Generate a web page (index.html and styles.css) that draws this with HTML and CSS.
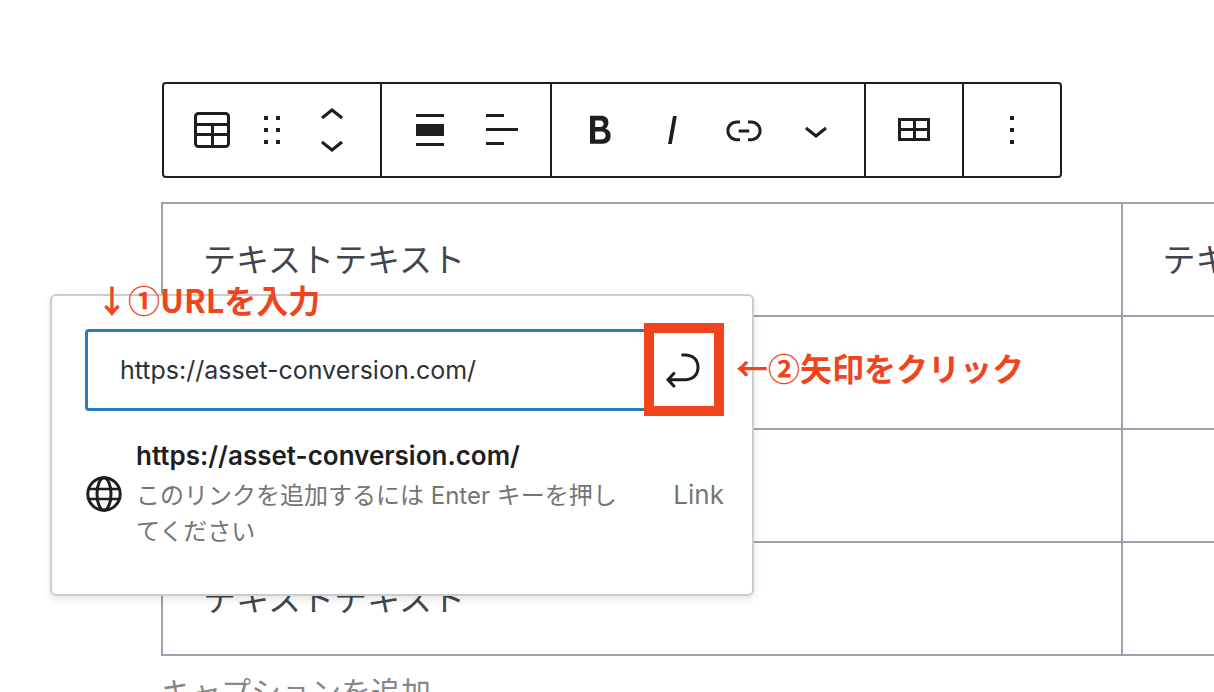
FILE: index.html
```html
<!DOCTYPE html>
<html lang="ja">
<head>
  <meta charset="UTF-8">
  <meta name="viewport" content="width=device-width, initial-scale=1.0">
  <title>テーブルにリンクを追加</title>
  <link rel="stylesheet" href="styles.css">
</head>
<body>
  <main class="editor">
    <!-- Toolbar -->
    <div class="toolbar" role="toolbar">
      <div class="toolbar-group">
        <button type="button" class="tool">
          <svg class="icon" viewBox="0 0 48 48"><rect x="7.5" y="7.5" width="33" height="33" rx="3" fill="none" stroke="currentColor" stroke-width="3"/><path d="M7 18.5h34M7 28.5h34M24.5 19v22" fill="none" stroke="currentColor" stroke-width="3"/></svg>
        </button>
        <button type="button" class="tool tool-drag">
          <svg class="icon" viewBox="0 0 48 48"><path d="M16 10h4v4h-4zM28 10h4v4h-4zM16 22h4v4h-4zM28 22h4v4h-4zM16 34h4v4h-4zM28 34h4v4h-4z"/></svg>
        </button>
        <div class="movers">
          <button type="button" class="mover">
            <svg class="icon-half" viewBox="0 6 24 12"><path d="M6.5 12.4L12 8l5.5 4.4-.9 1.2L12 10l-4.5 3.6-1-1.2z"/></svg>
          </button>
          <button type="button" class="mover">
            <svg class="icon-half" viewBox="0 6 24 12"><path d="M17.5 11.6L12 16l-5.5-4.4.9-1.2L12 14l4.5-3.6 1 1.2z"/></svg>
          </button>
        </div>
      </div>
      <div class="toolbar-group">
        <button type="button" class="tool">
          <svg class="icon" viewBox="0 0 48 48"><path d="M10 8h28v3H10zM10 18h28v12H10zM10 37h28v3H10z"/></svg>
        </button>
        <button type="button" class="tool">
          <svg class="icon" viewBox="0 0 48 48"><path d="M8 8h18v3H8zM8 22h32v3H8zM8 36h18v3H8z"/></svg>
        </button>
      </div>
      <div class="toolbar-group">
        <button type="button" class="tool">
          <svg class="icon" viewBox="0 0 24 24"><path d="M14.7 11.3c1-.6 1.5-1.6 1.5-3 0-2.3-1.3-3.4-4-3.4H7v14h5.8c1.4 0 2.5-.3 3.3-1 .8-.7 1.2-1.7 1.2-2.9.1-1.9-.8-3.1-2.6-3.7zm-5.1-4h2.3c.6 0 1.1.1 1.4.4.3.3.5.7.5 1.2s-.2 1-.5 1.2c-.3.3-.8.4-1.4.4H9.6V7.3zm4.6 9c-.4.3-1 .4-1.7.4H9.6v-3.9h2.9c.7 0 1.3.2 1.7.5.4.3.6.8.6 1.4 0 .7-.2 1.2-.6 1.6z"/></svg>
        </button>
        <button type="button" class="tool">
          <svg class="icon" viewBox="0 0 24 24"><path d="M12.5 5L10 19h1.9l2.5-14z"/></svg>
        </button>
        <button type="button" class="tool">
          <svg class="icon" viewBox="0 0 24 24"><path d="M15.6 7.2H14v1.5h1.6c2 0 3.7 1.7 3.7 3.7s-1.7 3.7-3.7 3.7H14v1.5h1.6c2.8 0 5.2-2.3 5.2-5.2 0-2.9-2.3-5.2-5.2-5.2zM4.7 12.4c0-2 1.7-3.7 3.7-3.7H10V7.2H8.4c-2.9 0-5.2 2.3-5.2 5.2 0 2.9 2.3 5.2 5.2 5.2H10v-1.5H8.4c-2 0-3.7-1.7-3.7-3.7zm4.6.9h5.3v-1.5H9.3v1.5z"/></svg>
        </button>
        <button type="button" class="tool">
          <svg class="icon" viewBox="0 0 24 24"><path d="M17.5 11.6L12 16l-5.5-4.4.9-1.2L12 14l4.5-3.6 1 1.2z"/></svg>
        </button>
      </div>
      <div class="toolbar-group">
        <button type="button" class="tool">
          <svg class="icon" viewBox="0 0 48 48"><path d="M9.5 13.5h29v20h-29zM24.5 13v21M9 23.5h30" fill="none" stroke="currentColor" stroke-width="3"/></svg>
        </button>
      </div>
      <div class="toolbar-group">
        <button type="button" class="tool">
          <svg class="icon" viewBox="0 0 48 48"><path d="M22 10h4v4h-4zM22 22h4v4h-4zM22 34h4v4h-4z"/></svg>
        </button>
      </div>
    </div>

    <!-- Table block -->
    <figure class="table-block">
      <table>
        <tbody>
          <tr><td>テキストテキスト</td><td>テキストテキスト</td></tr>
          <tr><td></td><td></td></tr>
          <tr><td></td><td></td></tr>
          <tr><td>テキストテキスト</td><td></td></tr>
        </tbody>
      </table>
      <figcaption>キャプションを追加</figcaption>
    </figure>
  </main>

  <!-- Link popover -->
  <div class="popover">
    <form class="link-form">
      <input type="text" class="link-input" aria-label="URL" value="https://asset-conversion.com/">
      <button type="submit" class="link-submit">
        <svg class="icon" viewBox="0 0 24 24"><path d="M6.734 16.106l2.176-2.38-1.093-1.028-3.846 4.158 3.846 4.157 1.093-1.027-2.176-2.38h2.811c1.125 0 2.25.03 3.374 0 1.428-.001 3.362-.25 4.963-1.277 1.66-1.065 2.868-2.906 2.868-5.859 0-2.479-1.327-4.896-3.65-5.93-1.82-.813-3.044-.8-4.806-.788l-.567.002v1.5c.184 0 .368 0 .553-.002 1.82-.007 2.704-.014 4.21.657 1.854.827 2.76 2.657 2.76 4.561 0 2.472-.973 3.824-2.178 4.596-1.258.807-2.864 1.04-4.163 1.04h-.02c-1.115.03-2.229 0-3.344 0H6.734z"/></svg>
      </button>
    </form>
    <button type="button" class="suggestion">
      <svg class="globe" viewBox="0 0 36 36"><g fill="none" stroke="currentColor" stroke-width="3"><circle cx="18" cy="18" r="16.2"/><ellipse cx="18" cy="18" rx="7" ry="16.2"/><path d="M2 13h32M2 23h32" stroke-width="2.4"/></g></svg>
      <span class="suggestion-text">
        <span class="suggestion-title">https://asset-conversion.com/</span>
        <span class="suggestion-info">このリンクを追加するには Enter キーを押してください</span>
      </span>
      <span class="suggestion-type">Link</span>
    </button>

    <!-- Notes -->
    <span class="note note-url">↓①URLを入力</span>
    <span class="note-frame"></span>
    <span class="note note-click">←②矢印をクリック</span>
  </div>
</body>
</html>
```
FILE: styles.css
```css
/* Reset */
* {
  box-sizing: border-box;
  margin: 0;
  padding: 0;
}

body {
  position: relative;
  height: 100vh;
  overflow: hidden;
  background: #fff;
  color: #1e1e1e;
  font-family: Inter, "Noto Sans CJK JP", sans-serif;
}

button {
  border: none;
  background: none;
  color: inherit;
  font: inherit;
  cursor: pointer;
}

svg {
  display: block;
  flex: none;
  fill: currentColor;
}

.icon {
  width: 48px;
  height: 48px;
}

.icon-half {
  width: 48px;
  height: 24px;
}

.editor {
  padding: 82px 0 0 162px;
}

/* Toolbar */
.toolbar {
  display: inline-flex;
  height: 96px;
  border: 2px solid #1e1e1e;
  border-radius: 4px;
  background: #fff;
  vertical-align: top;
}

.toolbar-group {
  display: flex;
  align-items: center;
  padding: 0 12px;
  border-right: 2px solid #1e1e1e;
}

.toolbar-group:last-child {
  border-right: none;
}

.tool {
  display: flex;
  align-items: center;
  justify-content: center;
  width: 72px;
  height: 72px;
}

.tool-drag {
  width: 48px;
}

.movers {
  display: flex;
  flex-direction: column;
  gap: 4px;
}

.mover {
  padding: 0 12px;
}

/* Table, wider than the window */
.table-block {
  margin: 24px -868px 0 -1px;
}

.table-block table {
  width: 100%;
  table-layout: fixed;
  border-collapse: collapse;
}

.table-block td {
  height: 113px;
  padding: 0 40px;
  border: 2px solid #9ca3af;
  color: #40464d;
  font-size: 33px;
  line-height: 48px;
}

.table-block figcaption {
  margin-top: 12px;
  color: #888;
  font-size: 30px;
  line-height: 48px;
}

/* Popover */
.popover {
  position: absolute;
  top: 294px;
  left: 50px;
  width: 704px;
  padding: 33px 28px 44px 33px;
  border: 2px solid #ccc;
  border-radius: 6px;
  background: #fff;
  box-shadow: 0 4px 8px rgba(0, 0, 0, 0.1);
}

.link-form {
  display: flex;
  align-items: center;
  height: 82px;
  margin-right: 4px;
  padding-right: 11px;
  border: 3px solid #2b7bb9;
  border-radius: 4px;
}

.link-input {
  flex: 1;
  min-width: 0;
  height: 72px;
  padding: 0 32px;
  border: none;
  outline: none;
  background: none;
  color: #2c3338;
  font-family: inherit;
  font-size: 25px;
}

.suggestion {
  display: flex;
  align-items: center;
  width: 100%;
  margin-top: 27px;
  text-align: left;
}

.globe {
  width: 36px;
  height: 36px;
  margin: 0 14px 0 1px;
}

.suggestion-text {
  flex: 1;
  padding-right: 52px;
}

.suggestion-title,
.suggestion-info {
  display: block;
}

.suggestion-title {
  margin-bottom: 4px;
  font-size: 26px;
  font-weight: 600;
  line-height: 36px;
}

.suggestion-info {
  color: #757575;
  font-size: 24px;
  line-height: 36px;
}

.suggestion-type {
  color: #757575;
  font-size: 26px;
}

/* Notes */
.note {
  position: absolute;
  color: #f0441c;
  font-family: "Noto Sans CJK JP", sans-serif;
  font-size: 32px;
  font-weight: 700;
  line-height: 32px;
  white-space: nowrap;
}

.note-url {
  top: -13px;
  left: 44px;
}

.note-click {
  top: 55px;
  left: 684px;
}

.note-frame {
  position: absolute;
  top: 27px;
  left: 592px;
  width: 80px;
  height: 93px;
  border: 10px solid #f0441c;
  pointer-events: none;
}
```
